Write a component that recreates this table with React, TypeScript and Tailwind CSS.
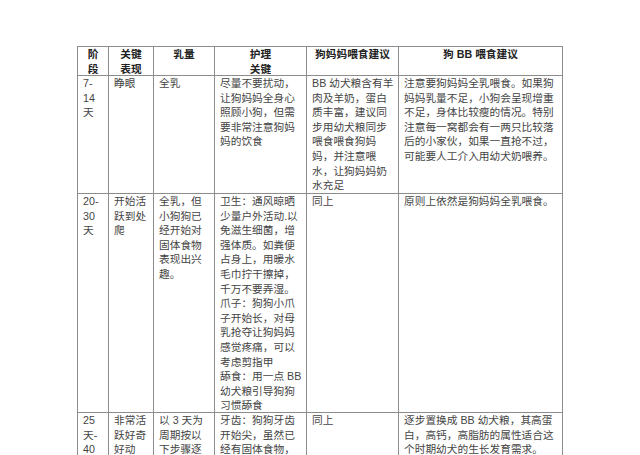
import React from "react";

const head: string[][] = [
  ["阶", "段"],
  ["关键", "表现"],
  ["乳量"],
  ["护理", "关键"],
  ["狗妈妈喂食建议"],
  ["狗 BB 喂食建议"],
];

const rows: string[][][] = [
  [
    ["7-", "14", "天"],
    ["睁眼"],
    ["全乳"],
    ["尽量不要扰动，", "让狗妈妈全身心", "照顾小狗，但需", "要非常注意狗妈", "妈的饮食"],
    ["BB 幼犬粮含有羊", "肉及羊奶，蛋白", "质丰富，建议同", "步用幼犬粮同步", "喂食喂食狗妈", "妈，并注意喂", "水，让狗妈妈奶", "水充足"],
    ["注意要狗妈妈全乳喂食。如果狗", "妈妈乳量不足，小狗会呈现增重", "不足，身体比较瘦的情况。特别", "注意每一窝都会有一两只比较落", "后的小家伙，如果一直抢不过，", "可能要人工介入用幼犬奶喂养。"],
  ],
  [
    ["20-", "30", "天"],
    ["开始活", "跃到处", "爬"],
    ["全乳，但", "小狗狗已", "经开始对", "固体食物", "表现出兴", "趣。"],
    ["卫生：通风晾晒", "少量户外活动.以", "免滋生细菌，增", "强体质。如粪便", "占身上，用暖水", "毛巾拧干擦掉，", "千万不要弄湿。", "爪子：狗狗小爪", "子开始长，对母", "乳抢夺让狗妈妈", "感觉疼痛，可以", "考虑剪指甲", "舔食：用一点 BB", "幼犬粮引导狗狗", "习惯舔食"],
    ["同上"],
    ["原则上依然是狗妈妈全乳喂食。"],
  ],
  [
    ["25", "天-", "40"],
    ["非常活", "跃好奇", "好动"],
    ["以 3 天为", "周期按以", "下步骤逐"],
    ["牙齿：狗狗牙齿", "开始尖，虽然已", "经有固体食物，"],
    ["同上"],
    ["逐步置换成 BB 幼犬粮，其高蛋", "白，高钙，高脂肪的属性适合这", "个时期幼犬的生长发育需求。"],
  ],
];

export default function App() {
  return (
    <div
      className="w-[640px] h-[455px] overflow-hidden bg-white pt-[46px] pl-[77px]"
      style={{ fontFamily: '"Liberation Sans", "Noto Sans CJK SC", sans-serif' }}
    >
      <div className="w-[486px] grid grid-cols-[31px_45px_61px_92px_92px_164px] grid-rows-[29px_118px_219px_auto] border-l border-t border-[#8c8c8c] text-[10.7px] leading-[14.6px]">
        {head.map((lines, i) => (
          <div
            key={"h" + i}
            className="border-r border-b border-[#8c8c8c] px-[5px] text-center font-bold text-[#222]"
          >
            {lines.map((l, j) => (
              <div key={j} className="whitespace-nowrap">
                {l}
              </div>
            ))}
          </div>
        ))}
        {rows.map((row, r) =>
          row.map((lines, c) => (
            <div
              key={r + "-" + c}
              className="border-r border-b border-[#8c8c8c] px-[5px] text-[#444]"
            >
              {lines.map((l, j) => (
                <div key={j} className="whitespace-nowrap">
                  {l}
                </div>
              ))}
            </div>
          ))
        )}
      </div>
    </div>
  );
}
